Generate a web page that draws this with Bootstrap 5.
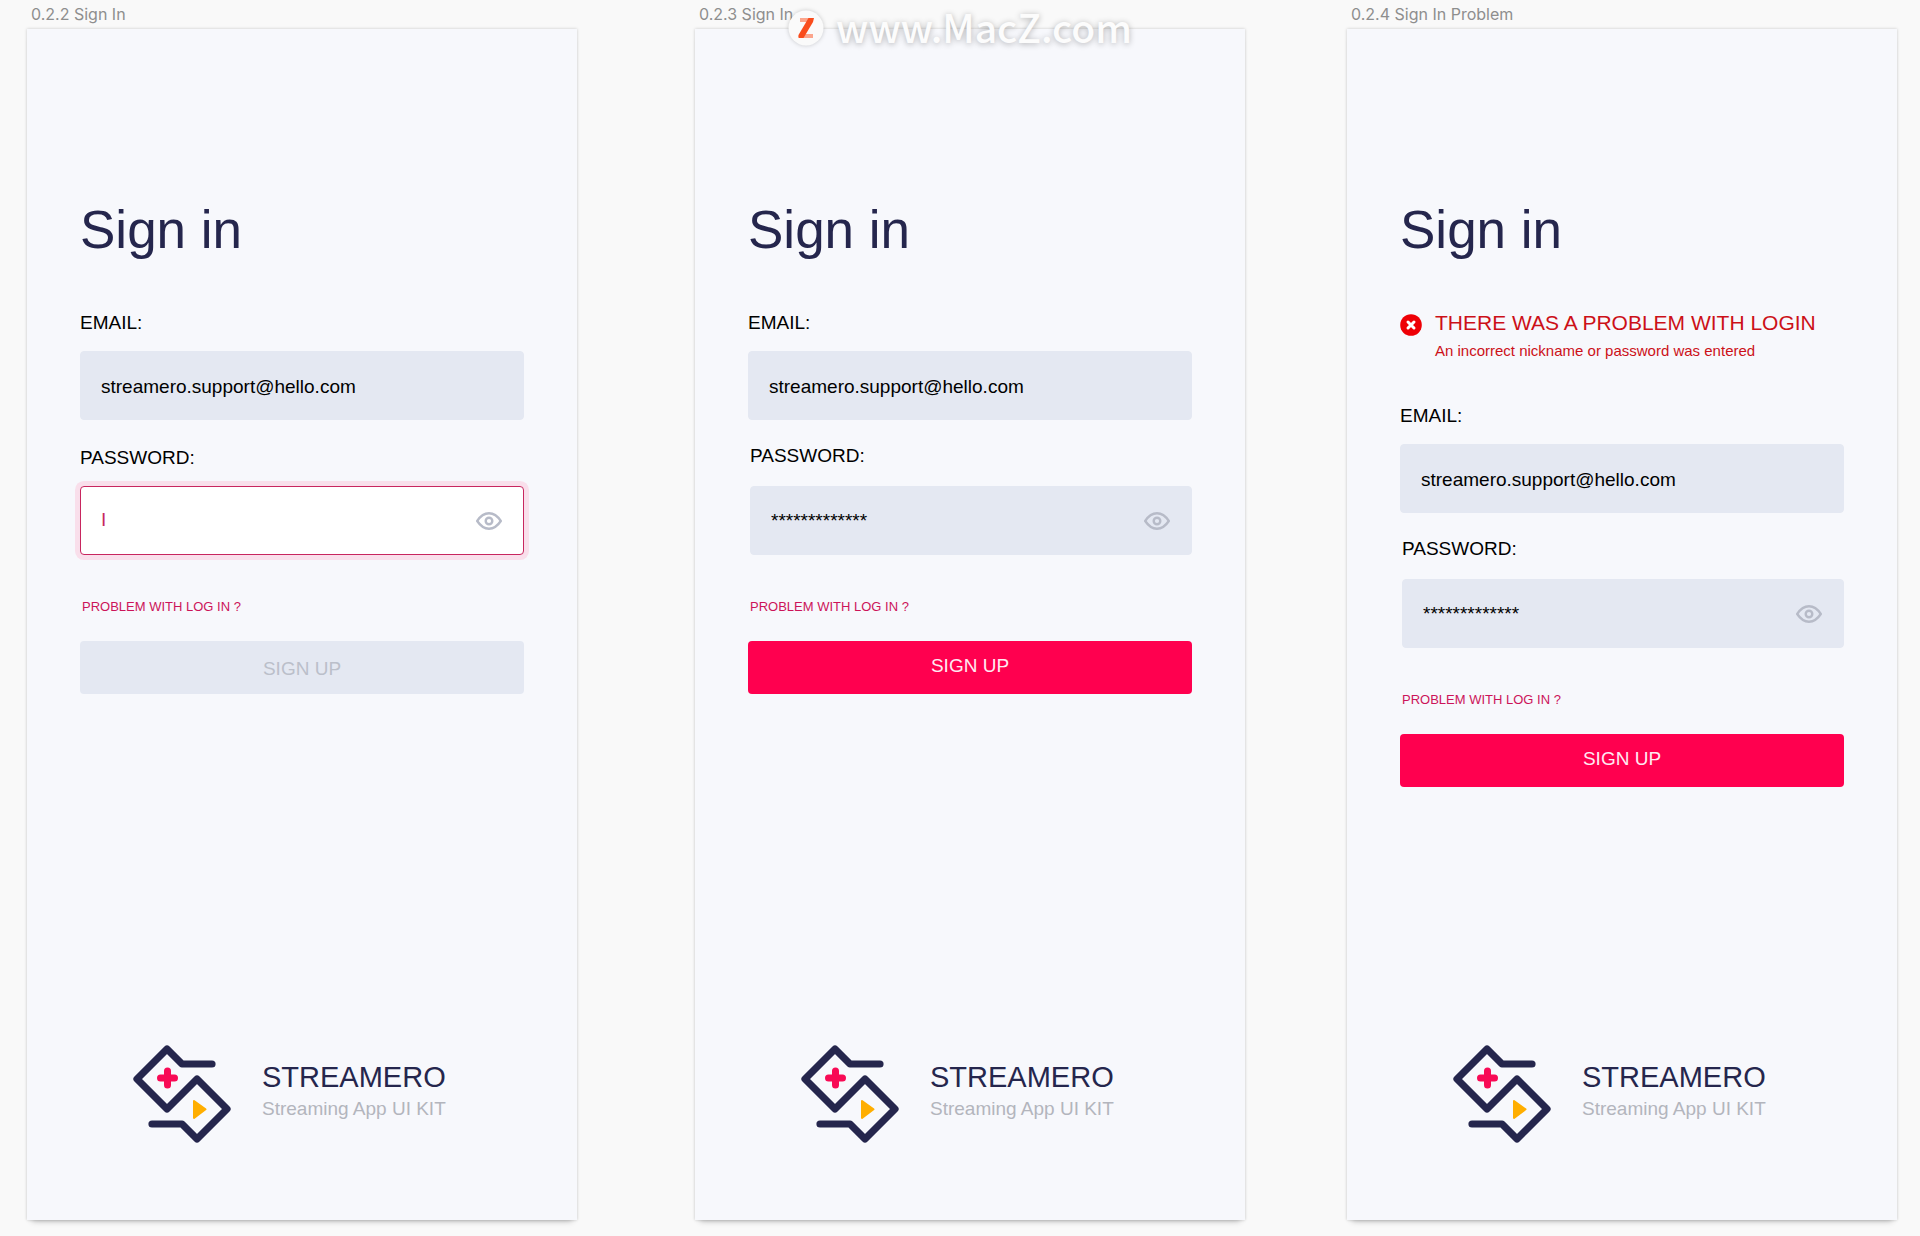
<!DOCTYPE html>
<html lang="en">
<head>
<meta charset="utf-8">
<meta name="viewport" content="width=device-width, initial-scale=1">
<title>Streamero – Sign In</title>
<link href="https://cdn.jsdelivr.net/npm/bootstrap@5.3.0/dist/css/bootstrap.min.css" rel="stylesheet">
<style>
  body { background: #f9f9f9; color: #000; font-family: "Liberation Sans", Arial, sans-serif; font-size: 19px; line-height: 24px; }
  .canvas { display: grid; grid-template-columns: 550fr 118fr 550fr 102fr 550fr; padding: 2px 23px 16px 27px; min-height: 100vh; }
  .canvas > :nth-child(1) { grid-column: 1; }
  .canvas > :nth-child(2) { grid-column: 3; }
  .canvas > :nth-child(3) { grid-column: 5; }
  .artboard-name { font-family: Inter, sans-serif; font-size: 16px; line-height: 24px; font-weight: 400; color: #8e8e8e; margin: 0 0 3px; padding-left: 4px; }
  .artboard { background: #f7f8fc; padding: 171px 53px 77px; box-shadow: 0 0 3px rgba(0,0,0,.2), 0 6px 6px -5px rgba(0,0,0,.28); }
  .screen-title { color: #25264d; font-size: 53px; line-height: 60px; font-weight: 400; margin: 0; }
  .signin-form { margin-top: 51px; }
  .problem { margin-top: 49px; gap: 13px; color: #cc1018; }
  .problem svg { margin-top: 5px; }
  .problem-title { font-size: 21px; line-height: 28px; margin: 0 0 4px; white-space: nowrap; }
  .problem-text { font-size: 15px; line-height: 20px; margin: 0; }
  .problem + .signin-form { margin-top: 43px; }
  .field-label { display: block; margin-bottom: 16px; }
  .field-box.form-control { height: 69px; border: 1px solid #e4e8f2; border-radius: 4px; background: #e4e8f2; color: #000; font-size: 19px; line-height: 24px; padding: 2px 60px 0 20px; box-shadow: none; }
  .secret { margin-top: 24px; padding-left: 2px; }
  .secret .field-label { margin-bottom: 18px; }
  .secret .field-box.form-control { padding-top: 0; }
  .secret.editing { margin-top: 26px; padding-left: 0; }
  .secret.editing .field-label { margin-bottom: 16px; }
  .secret.editing .field-box.form-control { background: #fff; border: 1px solid #c8265f; box-shadow: 0 0 0 5px #f9dfeb; color: #c8265f; padding-bottom: 2px; }
  .reveal { right: 22px; color: #b7bbc8; line-height: 0; }
  .help-link { display: block; width: max-content; margin: 44px 0 26px 2px; font-size: 13px; line-height: 16px; color: #cc1459; text-decoration: none; }
  .submit.btn { height: 53px; border: 0; border-radius: 4px; background: #ff004f; color: #ffeaf2; font-size: 19px; line-height: 24px; padding: 0 12px 3px; }
  .submit.btn:disabled { background: #e4e8f2; color: #bbbfca; opacity: 1; padding: 2px 12px 0; }
  .brand { gap: 31px; padding: 40px 0 0 53px; }
  .brand-text { padding-top: 14px; }
  .brand-name { color: #25264d; font-size: 29px; line-height: 36px; margin: 0 0 2px; }
  .brand-sub { color: #b3b5bd; margin: 0; }
  .site-mark { top: 6px; left: 0; right: 0; gap: 12px; pointer-events: none; }
  .site-mark svg { filter: drop-shadow(0 0 2px rgba(0,0,0,.2)); }
  .site-mark span { font-family: "Noto Sans CJK SC", "Noto Sans", sans-serif; font-size: 39px; line-height: 40px; padding-bottom: 4px; font-weight: 500; color: #fcfcfc; text-shadow: 0 1px 6px rgba(0,0,0,.3); }
  @media (max-width: 1199px) {
    .canvas { display: block; }
    .artboard { padding: 60px 24px; }
    .brand { padding-left: 0; }
  }
</style>
</head>
<body>
<svg class="d-none" aria-hidden="true">
  <symbol id="eye" viewBox="0 0 26 18">
    <path d="M1.200 9C4.500 4 8.500 1.300 13 1.300S21.500 4 24.800 9C21.500 14 17.500 16.700 13 16.700S4.500 14 1.200 9Z" fill="none" stroke="currentColor" stroke-width="2.400" stroke-linejoin="round"/>
    <circle cx="13" cy="9" r="3.300" fill="none" stroke="currentColor" stroke-width="2.400"/>
  </symbol>
  <symbol id="logo" viewBox="0 0 98 98">
    <path d="M79 19H49L34 4L4 34L34 64L64 34L94 64L64 94L49 79H19" fill="none" stroke="#25264d" stroke-width="7.200" stroke-linecap="round" stroke-linejoin="round"/>
    <path d="M34.500 26V40M27.500 33H41.500" stroke="#f80a55" stroke-width="7" stroke-linecap="round"/>
    <path d="M61 56L72.500 64.300L61 73Z" fill="#ffae00" stroke="#ffae00" stroke-width="2" stroke-linejoin="round"/>
  </symbol>
</svg>

<main class="canvas">
  <section class="d-flex flex-column">
    <h2 class="artboard-name">0.2.2 Sign In</h2>
    <div class="artboard d-flex flex-column flex-grow-1">
      <h1 class="screen-title">Sign in</h1>
      <form class="signin-form">
        <label class="field-label" for="email1">EMAIL:</label>
        <input class="form-control field-box" id="email1" type="text" value="streamero.support@hello.com">
        <div class="secret editing">
          <label class="field-label" for="pass1">PASSWORD:</label>
          <div class="position-relative">
            <input class="form-control field-box" id="pass1" type="text" value="I">
            <button class="reveal btn p-0 border-0 position-absolute top-50 translate-middle-y" type="button" aria-label="Show password"><svg width="26" height="18"><use href="#eye"/></svg></button>
          </div>
        </div>
        <a class="help-link" href="#">PROBLEM WITH LOG IN ?</a>
        <button class="btn submit w-100" type="submit" disabled>SIGN UP</button>
      </form>
      <footer class="brand d-flex mt-auto">
        <svg class="flex-shrink-0" width="98" height="98" aria-hidden="true"><use href="#logo"/></svg>
        <div class="brand-text"><p class="brand-name">STREAMERO</p><p class="brand-sub">Streaming App UI KIT</p></div>
      </footer>
    </div>
  </section>

  <section class="d-flex flex-column">
    <h2 class="artboard-name">0.2.3 Sign In</h2>
    <div class="artboard d-flex flex-column flex-grow-1">
      <h1 class="screen-title">Sign in</h1>
      <form class="signin-form">
        <label class="field-label" for="email2">EMAIL:</label>
        <input class="form-control field-box" id="email2" type="text" value="streamero.support@hello.com">
        <div class="secret">
          <label class="field-label" for="pass2">PASSWORD:</label>
          <div class="position-relative">
            <input class="form-control field-box" id="pass2" type="text" value="*************">
            <button class="reveal btn p-0 border-0 position-absolute top-50 translate-middle-y" type="button" aria-label="Show password"><svg width="26" height="18"><use href="#eye"/></svg></button>
          </div>
        </div>
        <a class="help-link" href="#">PROBLEM WITH LOG IN ?</a>
        <button class="btn submit w-100" type="submit">SIGN UP</button>
      </form>
      <footer class="brand d-flex mt-auto">
        <svg class="flex-shrink-0" width="98" height="98" aria-hidden="true"><use href="#logo"/></svg>
        <div class="brand-text"><p class="brand-name">STREAMERO</p><p class="brand-sub">Streaming App UI KIT</p></div>
      </footer>
    </div>
  </section>

  <section class="d-flex flex-column">
    <h2 class="artboard-name">0.2.4 Sign In Problem</h2>
    <div class="artboard d-flex flex-column flex-grow-1">
      <h1 class="screen-title">Sign in</h1>
      <div class="problem d-flex" role="alert">
        <svg class="flex-shrink-0" width="22" height="22" viewBox="0 0 22 22" aria-hidden="true"><circle cx="11" cy="11" r="10.800" fill="#ee0006"/><path d="M8 8L14 14M14 8L8 14" stroke="#fff" stroke-width="3" stroke-linecap="round"/></svg>
        <div>
          <p class="problem-title">THERE WAS A PROBLEM WITH LOGIN</p>
          <p class="problem-text">An incorrect nickname or password was entered</p>
        </div>
      </div>
      <form class="signin-form">
        <label class="field-label" for="email3">EMAIL:</label>
        <input class="form-control field-box" id="email3" type="text" value="streamero.support@hello.com">
        <div class="secret">
          <label class="field-label" for="pass3">PASSWORD:</label>
          <div class="position-relative">
            <input class="form-control field-box" id="pass3" type="text" value="*************">
            <button class="reveal btn p-0 border-0 position-absolute top-50 translate-middle-y" type="button" aria-label="Show password"><svg width="26" height="18"><use href="#eye"/></svg></button>
          </div>
        </div>
        <a class="help-link" href="#">PROBLEM WITH LOG IN ?</a>
        <button class="btn submit w-100" type="submit">SIGN UP</button>
      </form>
      <footer class="brand d-flex mt-auto">
        <svg class="flex-shrink-0" width="98" height="98" aria-hidden="true"><use href="#logo"/></svg>
        <div class="brand-text"><p class="brand-name">STREAMERO</p><p class="brand-sub">Streaming App UI KIT</p></div>
      </footer>
    </div>
  </section>
</main>

<div class="site-mark position-absolute d-flex justify-content-center align-items-center">
  <svg width="36" height="36" viewBox="0 0 36 36" aria-hidden="true">
    <circle cx="18" cy="18" r="17.500" fill="#fafafa"/>
    <path d="M12 8H25V12H12ZM11 24H25V28H11Z" fill="#fba58c"/>
    <path d="M20.500 8H26L25 12L15.500 28H11Q10 28 10.500 25Z" fill="#f94c1c"/>
  </svg>
  <span>www.MacZ.com</span>
</div>
<script src="https://cdn.jsdelivr.net/npm/bootstrap@5.3.0/dist/js/bootstrap.bundle.min.js"></script>
</body>
</html>
